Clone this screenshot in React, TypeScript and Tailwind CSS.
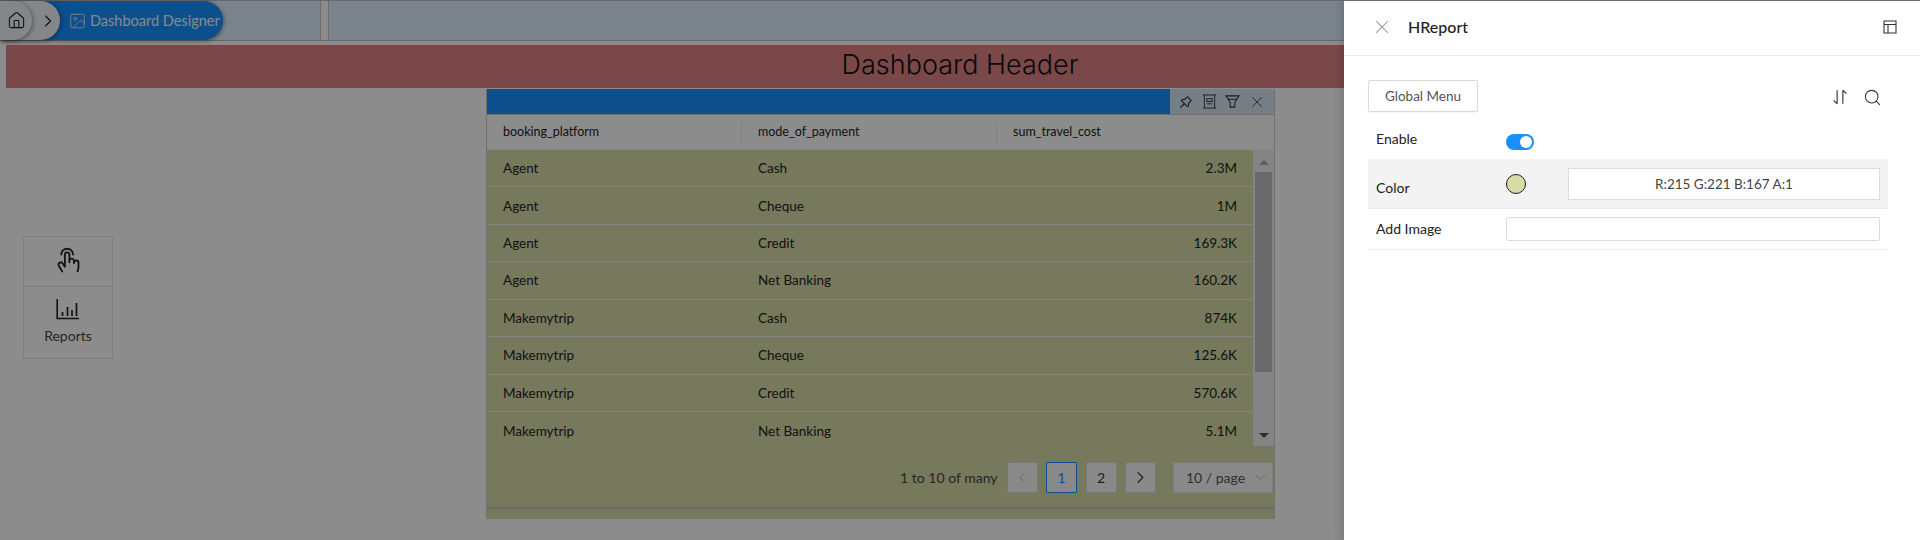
import { Image, Search, X, ChevronRight, ChevronLeft, ChevronDown, House } from "lucide-react";
import { PiHandTap } from "react-icons/pi";
import { AiOutlinePushpin } from "react-icons/ai";

const rows = [
  ["Agent", "Cash", "2.3M"],
  ["Agent", "Cheque", "1M"],
  ["Agent", "Credit", "169.3K"],
  ["Agent", "Net Banking", "160.2K"],
  ["Makemytrip", "Cash", "874K"],
  ["Makemytrip", "Cheque", "125.6K"],
  ["Makemytrip", "Credit", "570.6K"],
  ["Makemytrip", "Net Banking", "5.1M"],
];

function PageBtn({ children, active, muted }: { children: React.ReactNode; active?: boolean; muted?: boolean }) {
  return (
    <div
      className={`w-[31px] h-[31px] flex items-center justify-center bg-[#fafafa] border rounded-[2px] ${
        active ? "border-[#1890ff] text-[#1890ff]" : "border-[#d9d9d9] text-[#333]"
      } ${muted ? "text-[#bbbbbb]" : ""}`}
    >
      {children}
    </div>
  );
}

export default function App() {
  return (
    <div className="relative w-[1920px] h-[540px] overflow-hidden bg-white text-[#222] font-['Lato','Liberation_Sans',sans-serif] text-[13px]">
      {/* top bar */}
      <div className="h-[41px] border-t border-b border-[#bdbdbd] flex">
        <div className="w-[321px] h-full bg-[#e0f0ff] border-r border-[#c4c4c4] flex relative">
          <div className="absolute left-0 top-0 h-full w-[223px] flex">
            <div className="absolute left-0 top-0 h-full w-[223px] pl-[68px] pr-2 rounded-r-[20px] bg-[#1592ff] text-[#f4faff] flex items-center shadow-[1px_1px_4px_rgba(0,0,0,0.4)]">
              <Image className="w-[19px] h-[18px] mr-[3px] shrink-0" strokeWidth={1.1} />
              <span className="text-[14.5px] whitespace-nowrap">Dashboard Designer</span>
            </div>
            <div className="absolute left-0 top-0 h-full w-[60px] rounded-r-[20px] bg-[#f0f5f9] flex items-center justify-end pr-[2px] shadow-[2px_1px_4px_rgba(0,0,0,0.3)]">
              <ChevronRight className="w-[20px] h-[20px]" strokeWidth={1.4} />
            </div>
            <div className="absolute left-0 top-0 h-full w-[32px] rounded-r-[20px] bg-[#f0f5f9] flex items-center justify-center shadow-[1px_1px_4px_rgba(0,0,0,0.4)]">
              <House className="w-[19px] h-[19px]" strokeWidth={1.4} />
            </div>
          </div>
        </div>
        <div className="w-[7px]" />
        <div className="flex-1 h-full bg-[#e0f0ff] border-l border-[#c4c4c4]" />
      </div>

      {/* dashboard header */}
      <div className="mt-[4px] ml-[6px] h-[43px] bg-[#de8484] flex items-center justify-center pr-[6px] pb-[2px] text-[27px] font-light font-['Inter',sans-serif] text-[#111]">
        Dashboard Header
      </div>

      {/* body */}
      <div className="flex items-start">
        {/* rail */}
        <div className="ml-[23px] mt-[148px] w-[90px] border border-[#e3e3e3] flex flex-col items-center shrink-0">
          <div className="h-[50px] w-full flex items-center justify-center border-b border-[#e3e3e3] pb-[3px]">
            <PiHandTap className="w-[29px] h-[29px]" />
          </div>
          <div className="h-[71px] w-full flex flex-col items-center pt-[11px]">
            <svg viewBox="0 0 24 22" className="w-[24px] h-[22px]" fill="none" stroke="currentColor">
              <path d="M1.2 1v19.5H23" strokeWidth="1.6" />
              <path d="M6.5 18v-4M11.5 18v-9M16 18v-6M20.5 18V5" strokeWidth="1.7" />
            </svg>
            <span className="mt-[5px] text-[14px] text-[#444]">Reports</span>
          </div>
        </div>

        {/* widget */}
        <div className="ml-[373px] mt-[1px] w-[789px] h-[430px] bg-[#d7dda7] flex flex-col shrink-0 border-l border-r border-[#cccccc]">
          <div className="h-[25px] bg-[#1890ff] flex justify-end shrink-0">
            <div className="w-[104px] bg-[#d8e8f5] flex items-center justify-around px-[4px] text-[#333]">
              <AiOutlinePushpin className="w-[16px] h-[16px]" />
              <svg viewBox="0 0 16 16" className="w-[15px] h-[15px]" fill="none" stroke="currentColor" strokeWidth="1">
                <path d="M1 1h14M1 15h14M2.5 1v14M13.5 1v14M5 5h6v3H5zM5 10.5h6" />
              </svg>
              <svg viewBox="0 0 16 16" className="w-[15px] h-[15px]" fill="none" stroke="currentColor" strokeWidth="1.1">
                <path d="M1 2h14l-4.5 7v5h-5V9zM3.5 5.5h9" />
              </svg>
              <X className="w-[18px] h-[18px]" strokeWidth={1.1} />
            </div>
          </div>
          <div className="h-[36px] bg-white border-t border-[#cccccc] flex items-center shrink-0 text-[12.5px] text-[#222]">
            <div className="w-[255px] pl-[16px] h-[20px] border-r border-[#e6e6e6] flex items-center">booking_platform</div>
            <div className="w-[255px] pl-[16px] h-[20px] border-r border-[#e6e6e6] flex items-center">mode_of_payment</div>
            <div className="pl-[16px]">sum_travel_cost</div>
          </div>
          <div className="flex items-start h-[296px] shrink-0">
            <div className="w-[766px] h-[296px] overflow-hidden">
              {rows.map((r, i) => (
                <div
                  key={i}
                  className={`h-[37.45px] flex items-center text-[13.5px] ${i < 7 ? "border-b border-[#f0f0ee]" : ""}`}
                >
                  <div className="w-[255px] pl-[16px]">{r[0]}</div>
                  <div className="w-[255px] pl-[16px]">{r[1]}</div>
                  <div className="flex-1 pr-[16px] text-right">{r[2]}</div>
                </div>
              ))}
            </div>
            <div className="w-[21px] h-[296px] bg-[#f1f1f1] flex flex-col items-center justify-between">
              <div className="flex flex-col items-center w-full">
                <div className="mt-[10px] w-0 h-0 border-x-[5px] border-x-transparent border-b-[5px] border-b-[#aaaaaa]" />
                <div className="mt-[7px] w-[17px] h-[200px] bg-[#c1c1c1]" />
              </div>
              <div className="mb-[8px] w-0 h-0 border-x-[5px] border-x-transparent border-t-[5px] border-t-[#505050]" />
            </div>
          </div>
          <div className="flex-1 flex flex-col">
            <div className="h-[63px] flex items-start justify-end pt-[16px] pr-[1px] border-b-2 border-[#c0c0c0]">
              <div className="flex items-center">
                <span className="text-[14px] text-[#444] mr-[9px] h-[31px] flex items-center">1 to 10 of many</span>
                <div className="flex gap-[8.5px] items-center">
                  <PageBtn muted><ChevronLeft className="w-[19px] h-[19px]" strokeWidth={1.1} /></PageBtn>
                  <PageBtn active><span className="text-[14px]">1</span></PageBtn>
                  <PageBtn><span className="text-[14px]">2</span></PageBtn>
                  <PageBtn><ChevronRight className="w-[19px] h-[19px]" strokeWidth={1.4} /></PageBtn>
                </div>
                <div className="ml-[17px] w-[100px] h-[31px] bg-[#fafafa] border border-[#e3e3e3] flex items-center pl-[12px] text-[14px] text-[#555]">
                  10 / page
                  <ChevronDown className="w-[17px] h-[17px] ml-[7px] text-[#aaa]" strokeWidth={1.1} />
                </div>
              </div>
            </div>
          </div>
        </div>
      </div>

      {/* dim overlay */}
      <div className="absolute inset-0 bg-black/45" />

      {/* side panel */}
      <div className="absolute right-0 top-0 w-[576px] h-[540px] bg-white border-t border-[#6d6d6d] shadow-[-3px_0_8px_rgba(0,0,0,0.15)] text-[#222]">
        <div className="h-[55px] border-b border-[#ececec] flex items-center pl-[27px] pr-[23px] pb-[2px]">
          <X className="w-[22px] h-[22px] text-[#8a8a8a]" strokeWidth={1.1} />
          <span className="ml-[15px] text-[16px] font-medium text-[#222]">HReport</span>
          <svg viewBox="0 0 14 14" className="ml-auto w-[14px] h-[14px]" fill="none" stroke="#333" strokeWidth="1.1">
            <path d="M1 1h12v12H1zM1 4.5h12M5 4.5V13" />
          </svg>
        </div>
        <div className="px-[24px]">
          <div className="mt-[24px] flex items-center justify-between">
            <div className="w-[110px] h-[32px] border border-[#d9d9d9] rounded-[2px] flex items-center justify-center text-[13.5px] text-[#555] shadow-[0_1px_2px_rgba(0,0,0,0.05)]">
              Global Menu
            </div>
            <div className="flex items-center gap-[15px] pr-[14px] pt-[2px]">
              <svg viewBox="0 0 14 14" className="w-[16px] h-[16px]" fill="none" stroke="#333" strokeWidth="1">
                <path d="M4.5 1v12M4.5 13L1.5 10M9.5 13V1M9.5 1l3 3" />
              </svg>
              <Search className="w-[19px] h-[19px] text-[#333]" strokeWidth={1.3} />
            </div>
          </div>
          <div className="mt-[11px] w-[520px]">
            <div className="h-[36px] flex items-start pl-[8px]">
              <span className="w-[130px] pt-[5px] text-[14px]">Enable</span>
              <div className="mt-[11px] w-[28px] h-[16px] rounded-full bg-[#1890ff] flex items-center justify-end pr-[2px]">
                <div className="w-[12px] h-[12px] rounded-full bg-white" />
              </div>
            </div>
            <div className="h-[50px] bg-[#f3f3f3] border-b border-[#ececec] flex items-start pl-[8px]">
              <span className="w-[130px] pt-[18px] text-[14px]">Color</span>
              <div className="mt-[15px] w-[20px] h-[20px] rounded-full bg-[#d7dda7] border border-[#222]" />
              <div className="ml-[42px] mt-[9px] w-[312px] h-[32px] bg-white border border-[#dcdcdc] flex items-center justify-center text-[13.5px] text-[#444]">
                R:215 G:221 B:167 A:1
              </div>
            </div>
            <div className="h-[41px] border-b border-[#ececec] flex items-center pl-[8px]">
              <span className="w-[130px] text-[14px] pb-[2px]">Add Image</span>
              <div className="w-[374px] h-[24px] bg-white border border-[#dcdcdc] rounded-[2px]" />
            </div>
          </div>
        </div>
      </div>
    </div>
  );
}
